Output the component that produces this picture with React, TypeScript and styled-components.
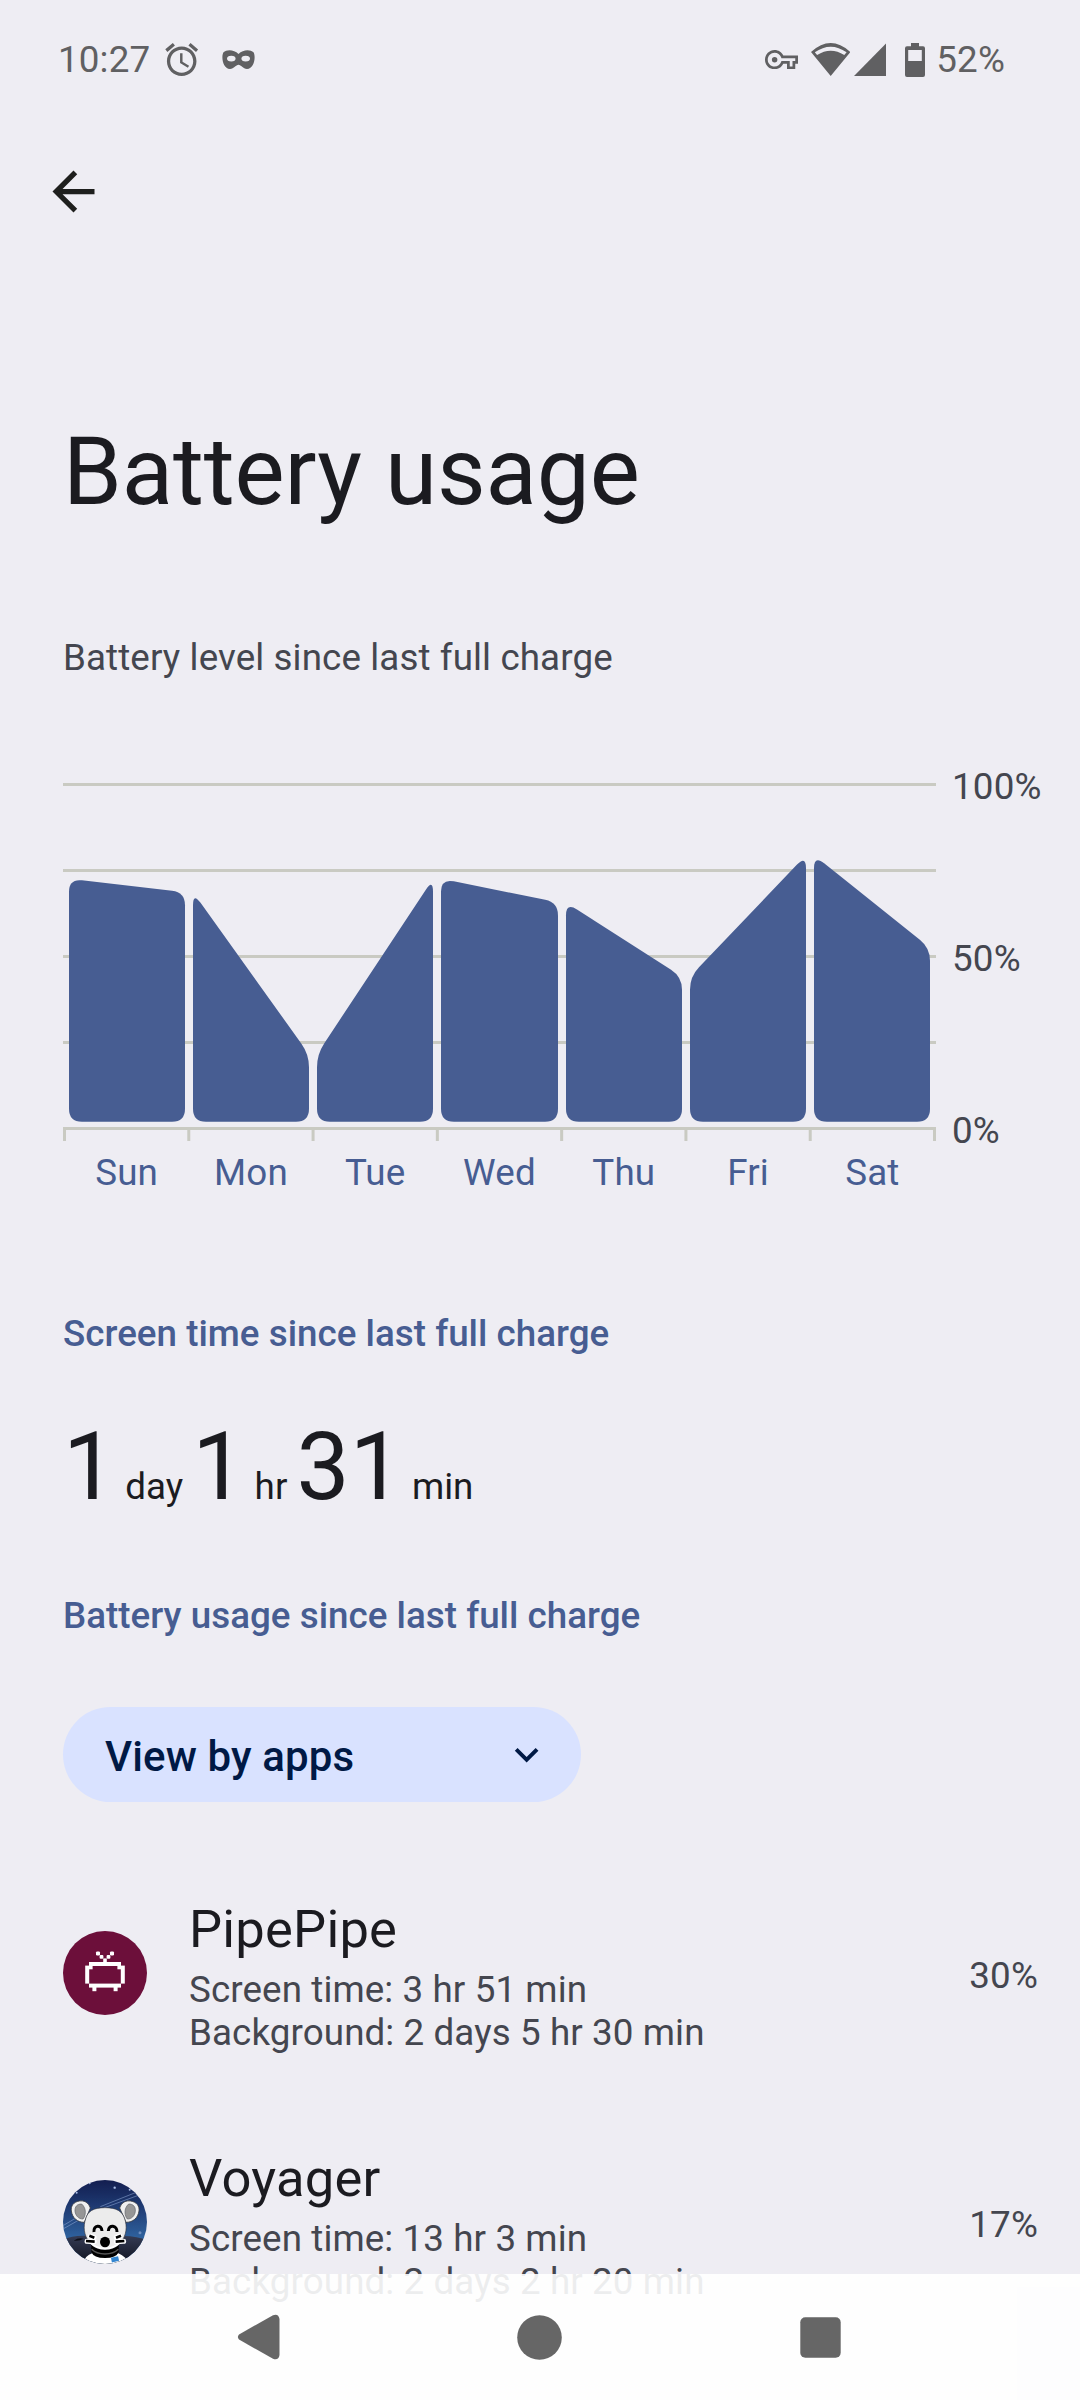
import React from "react";
import styled, { createGlobalStyle } from "styled-components";

const color = {
  page: "#eeedf3",
  ink: "#1b1b20",
  muted: "#44464f",
  accent: "#475d92",
  status: "#606062",
  grid: "#c9cac2",
  pill: "#d9e2ff",
  pillInk: "#001945",
  nav: "#666666",
};

const GlobalStyle = createGlobalStyle`
  body {
    margin: 0;
    background: ${color.page};
    font-family: Roboto, "Noto Sans", sans-serif;
  }
  svg { display: block; flex: none; }
`;

const Screen = styled.div`
  position: relative;
  width: 1080px;
  height: 2400px;
  overflow: hidden;
  background: ${color.page};
  color: ${color.ink};
`;

/* ---------- status bar ---------- */

const StatusBar = styled.header`
  display: flex;
  align-items: center;
  justify-content: space-between;
  height: 119px;
  padding: 0 75px 0 58px;
  color: ${color.status};
  font-size: 36.75px;
  font-weight: 450;
  letter-spacing: 0.15px;
  line-height: 44px;
`;

const StatusGroup = styled.div`
  display: flex;
  align-items: center;
`;

const StatusItem = styled.span<{ $gap: number }>`
  margin-left: ${(p) => p.$gap}px;
`;

const Clock = styled.span`
  width: 93px;
`;

const AlarmIcon = () => (
  <svg width="39.4" height="39.4" viewBox="0 0 24 24" fill="currentColor">
    <path d="M22 5.72l-4.6-3.86-1.29 1.53 4.6 3.86L22 5.72zM7.88 3.39L6.6 1.86 2 5.71l1.29 1.53 4.59-3.85zM12.5 8H11v6l4.75 2.85.75-1.23-4-2.37V8zM12 4c-4.97 0-9 4.03-9 9s4.02 9 9 9c4.97 0 9-4.03 9-9s-4.03-9-9-9zm0 16c-3.87 0-7-3.13-7-7s3.13-7 7-7 7 3.13 7 7-3.13 7-7 7z" />
  </svg>
);

const MaskIcon = () => (
  <svg width="33" height="19" viewBox="0 0 33 19" fill="currentColor">
    <path
      fillRule="evenodd"
      d="M1.5 2.200C4.500-.6 12-.8 16.500 4C21-.8 28.500-.6 31.500 2.200C34 6 32.500 19 25 19C21 19 19 14.800 16.500 14.800C14 14.800 12 19 8 19C.5 19-1 6 1.500 2.200ZM5 8.600a4.300 2.900 0 1 0 8.600 0a4.300 2.900 0 1 0-8.600 0ZM19.400 8.600a4.300 2.900 0 1 0 8.600 0a4.300 2.900 0 1 0-8.600 0Z"
    />
  </svg>
);

const KeyIcon = () => (
  <svg width="33" height="19.25" viewBox="0 5 24 14" fill="currentColor">
    <path d="M22 19h-6v-4h-2.680c-1.140 2.420-3.600 4-6.320 4-3.860 0-7-3.140-7-7s3.140-7 7-7c2.720 0 5.170 1.580 6.320 4H24v6h-2v4zm-4-2h2v-4h2v-2H11.940l-.23-.67C11.010 8.340 9.110 7 7 7c-2.760 0-5 2.240-5 5s2.240 5 5 5c2.110 0 4.010-1.340 4.710-3.330l.23-.67H18v4z" />
    <circle cx="7" cy="12" r="2" />
  </svg>
);

const WifiIcon = () => (
  <svg width="39.4" height="33" viewBox="0 0 39.4 33" fill="currentColor">
    <path
      fillRule="evenodd"
      d="M19.700 33L0 9Q19.700-9 39.400 9ZM3.800 9.300L6.100 12.100Q19.700 3.200 33.300 12.100L35.600 9.300Q19.700-2 3.800 9.300Z"
    />
  </svg>
);

const SignalIcon = () => (
  <svg width="32.5" height="33" viewBox="0 0 32.5 33" fill="currentColor">
    <path d="M0 33H32.500V0Z" />
  </svg>
);

const BatteryIcon = () => (
  <svg width="20" height="34" viewBox="0 0 20 34" fill="currentColor">
    <path
      fillRule="evenodd"
      d="M6 0h8v3.300h4a2 2 0 0 1 2 2V32a2 2 0 0 1-2 2H2a2 2 0 0 1-2-2V5.300a2 2 0 0 1 2-2h4ZM3.200 7v11h13.600V7Z"
    />
  </svg>
);

/* ---------- app bar and headings ---------- */

const AppBar = styled.nav`
  display: flex;
  align-items: center;
  height: 145px;
  padding-left: 42px;
`;

const IconButton = styled.button`
  display: flex;
  padding: 0;
  border: 0;
  background: none;
  color: #1e1f1d;
`;

const Content = styled.main`
  padding: 0 0 0 63px;
`;

const Title = styled.h1`
  margin: 152px 0 0;
  font-size: 94.5px;
  font-weight: 400;
  letter-spacing: -0.15px;
  line-height: 112px;
`;

const Caption = styled.p`
  margin: 107px 0 0;
  color: ${color.muted};
  font-size: 36.75px;
  letter-spacing: 0.11px;
  line-height: 45px;
`;

const SectionTitle = styled.h2<{ $top: number }>`
  margin: ${(p) => p.$top}px 0 0;
  color: ${color.accent};
  font-size: 36.75px;
  font-weight: 500;
  letter-spacing: 0.02px;
  line-height: 44px;
`;

/* ---------- chart ---------- */

const ChartRow = styled.section`
  display: flex;
  height: 431px;
  margin-top: 84px;
  font-size: 36.75px;
  letter-spacing: 0.2px;
  line-height: 44px;
`;

const PlotColumn = styled.div`
  width: 873px;
  padding-top: 19px;
`;

const DayLabels = styled.div`
  display: grid;
  grid-template-columns: repeat(7, 1fr);
  margin: 9.5px 1.5px 0;
  color: ${color.accent};
  text-align: center;
`;

const LevelLabels = styled.div`
  display: flex;
  flex-direction: column;
  justify-content: space-between;
  height: 388px;
  margin: 1px 0 0 16px;
  color: ${color.muted};
`;

const days = [
  { name: "Sun", from: 72, to: 68 },
  { name: "Mon", from: 68, to: 20 },
  { name: "Tue", from: 20, to: 72 },
  { name: "Wed", from: 72, to: 65 },
  { name: "Thu", from: 65, to: 43 },
  { name: "Fri", from: 43, to: 79 },
  { name: "Sat", from: 79, to: 51.5 },
];

const SLOT = 870 / 7;
const BASE = 338.8;
const UNIT = 3.375;
const RADIUS = 13;

type Point = [number, number];

/* Closed polygon whose corners are softened with quadratic curves. */
function roundedPolygon(points: Point[], radius: number): string {
  const toward = (a: Point, b: Point): Point => {
    const length = Math.hypot(b[0] - a[0], b[1] - a[1]);
    const k = radius / length;
    return [a[0] + (b[0] - a[0]) * k, a[1] + (b[1] - a[1]) * k];
  };
  const parts = points.map((p, i) => {
    const before = toward(p, points[(i + points.length - 1) % points.length]);
    const after = toward(p, points[(i + 1) % points.length]);
    return `${i ? "L" : "M"}${before.join(" ")}Q${p.join(" ")} ${after.join(" ")}`;
  });
  return parts.join("") + "Z";
}

const BatteryChart = () => (
  <svg width="873" height="358" viewBox="0 0 873 358">
    {[0, 86, 172, 258, 344].map((y) => (
      <rect key={y} x="0" y={y} width="873" height="3" fill={color.grid} />
    ))}
    {Array.from({ length: 8 }, (_, i) => (
      <rect key={i} x={i * SLOT} y="346" width="3" height="12" fill={color.grid} />
    ))}
    {days.map((d, i) => {
      const left = Math.floor(6 + i * SLOT);
      const right = Math.round((i + 1) * SLOT - 2.6);
      return (
        <path
          key={d.name}
          fill={color.accent}
          d={roundedPolygon(
            [
              [left, BASE],
              [left, BASE - d.from * UNIT],
              [right, BASE - d.to * UNIT],
              [right, BASE],
            ],
            RADIUS
          )}
        />
      );
    })}
  </svg>
);

/* ---------- screen time ---------- */

const Duration = styled.p`
  height: 112px;
  margin: 55px 0 0;
  font-size: 94.5px;
  line-height: 112px;
  white-space: pre;
`;

const Unit = styled.span`
  font-size: 36.75px;
  letter-spacing: 0.03px;
  line-height: 0;
`;

/* ---------- view selector ---------- */

const Selector = styled.button`
  display: flex;
  align-items: center;
  justify-content: space-between;
  width: 518px;
  height: 94.5px;
  margin-top: 69.5px;
  padding: 0 31px 0 42px;
  border: 0;
  border-radius: 48px;
  background: ${color.pill};
  color: ${color.pillInk};
  font-family: inherit;
  font-size: 42px;
  font-weight: 500;
  letter-spacing: 0.12px;
  line-height: 50px;
`;

const SelectorText = styled.span`
  padding-top: 5px;
`;

/* ---------- app list ---------- */

const AppList = styled.ul`
  margin: 50px 0 0;
  padding: 0;
  list-style: none;
`;

const AppRow = styled.li`
  display: flex;
  align-items: center;
  height: 249px;
  padding-right: 42px;
`;

const AppIcon = styled.div`
  width: 84px;
  height: 84px;
  margin: -6px 42px 0 0;
  border-radius: 50%;
  overflow: hidden;
`;

const AppText = styled.div`
  flex: 1;
  color: ${color.muted};
  font-size: 36.75px;
  letter-spacing: 0.1px;
  line-height: 43px;
`;

const AppName = styled.div`
  margin-bottom: 8px;
  color: ${color.ink};
  font-size: 52.5px;
  letter-spacing: 0.22px;
  line-height: 62px;
`;

const Percent = styled.div`
  color: ${color.muted};
  font-size: 36.75px;
  letter-spacing: 0.2px;
  line-height: 44px;
`;

const PipePipeIcon = () => (
  <svg width="84" height="84" viewBox="0 0 84 84">
    <rect width="84" height="84" fill="#6c0f3a" />
    <g fill="#fff">
      <rect x="26" y="31" width="32" height="4" />
      <rect x="22.2" y="34.6" width="4" height="18" />
      <rect x="57.8" y="34.6" width="4" height="18" />
      <rect x="26" y="34.5" width="3.6" height="3.8" />
      <rect x="54.4" y="34.5" width="3.6" height="3.8" />
      <rect x="26" y="52.6" width="32" height="4" />
      <rect x="29.4" y="56" width="4" height="4.2" />
      <rect x="50.6" y="56" width="4" height="4.2" />
      <rect x="33" y="20.4" width="4" height="4" rx="1.2" />
      <rect x="47" y="20.4" width="4" height="4" rx="1.2" />
      <rect x="36.6" y="24" width="3.8" height="3.8" rx="1" />
      <rect x="43.6" y="24" width="3.8" height="3.8" rx="1" />
      <rect x="40.2" y="27.4" width="3.6" height="4" />
    </g>
  </svg>
);

const VoyagerIcon = () => (
  <svg width="84" height="84" viewBox="0 0 252 252">
    <defs>
      <linearGradient id="sky" x1="0" y1="0" x2="0" y2="1">
        <stop offset="0" stopColor="#131e50" />
        <stop offset="0.4" stopColor="#23437c" />
        <stop offset="0.7" stopColor="#2f639f" />
      </linearGradient>
      <linearGradient id="hill" x1="0" y1="0" x2="0" y2="1">
        <stop offset="0" stopColor="#343b54" />
        <stop offset="1" stopColor="#10131f" />
      </linearGradient>
    </defs>
    <rect width="252" height="252" fill="url(#sky)" />
    <g stroke="#8fa9d6" strokeWidth="3" opacity="0.55">
      <path d="M0 137L42 112M0 147L46 121M112 80L222 36M122 84L226 46" />
    </g>
    <g fill="#a9bde6">
      <circle cx="155" cy="23" r="3.5" />
      <circle cx="80" cy="10" r="3" />
      <circle cx="200" cy="29" r="3" />
      <circle cx="41" cy="38" r="3" />
      <circle cx="231" cy="158" r="4.5" opacity="0.5" />
    </g>
    <path d="M0 180Q30 165 75 168H180Q225 168 252 182V252H0Z" fill="url(#hill)" />
    <path d="M32 182Q46 172 62 176Q50 184 32 182Z" fill="#0d0f18" />
    <path d="M60 252Q66 226 88 220L126 232L166 220Q190 230 198 252Z" fill="#fff" />
    <path d="M85 190H167V216Q160 234 126 234Q92 234 85 216Z" fill="#000" />
    <path d="M86 208Q100 222 126 222Q152 222 166 208" fill="none" stroke="#555" strokeWidth="4" />
    <rect x="145" y="231" width="22" height="14" fill="#3385d0" transform="rotate(-12 156 238)" />
    <g stroke="#34373f" strokeWidth="2.5">
      <path d="M82 84C76 66 62 61 49 63C31 66 23 78 25 93C28 114 43 127 64 127Z" fill="#f1f1f1" />
      <path d="M170 84C176 66 190 61 203 63C221 66 230 78 228 93C225 114 210 127 189 127Z" fill="#f1f1f1" />
    </g>
    <path d="M56 72C42 72 35 80 36 94C38 108 47 117 60 117C68 108 72 86 56 72Z" fill="#969696" stroke="#60646a" strokeWidth="2" />
    <path d="M197 72C211 72 218 80 217 94C215 108 206 117 193 117C185 108 181 86 197 72Z" fill="#969696" stroke="#60646a" strokeWidth="2" />
    <path d="M126 83C91 83 74 94 68 116C60 140 62 165 80 188C94 206 111 208 126 208C141 208 158 206 173 188C191 165 193 140 185 116C178 94 161 83 126 83Z" fill="#ececec" stroke="#333640" strokeWidth="2" />
    <g fill="none" stroke="#fff" strokeWidth="15" strokeLinecap="round">
      <path d="M72 184L94 185M82 168L93 172M182 184L160 185M171 168L160 172" />
    </g>
    <path d="M82 188Q100 206 126 206Q152 206 170 188" fill="none" stroke="#fff" strokeWidth="6" />
    <g fill="none" stroke="#000" strokeWidth="8">
      <path d="M69 183L95 185M79 167L94 173M184 183L158 185M174 167L159 173" />
      <path d="M93 156C90 135 116 132 117 153M136 153C137 132 163 135 162 156" strokeWidth="9" />
    </g>
    <ellipse cx="126" cy="186" rx="15" ry="16" fill="#000" />
  </svg>
);

const apps = [
  {
    name: "PipePipe",
    icon: <PipePipeIcon />,
    screen: "3 hr 51 min",
    background: "2 days 5 hr 30 min",
    percent: "30%",
  },
  {
    name: "Voyager",
    icon: <VoyagerIcon />,
    screen: "13 hr 3 min",
    background: "2 days 2 hr 20 min",
    percent: "17%",
  },
];

/* ---------- system navigation ---------- */

const SystemNav = styled.footer`
  position: absolute;
  left: 0;
  right: 0;
  bottom: 0;
  display: flex;
  align-items: center;
  justify-content: center;
  gap: 236px;
  height: 126px;
  padding-right: 1px;
  background: rgba(255, 255, 255, 0.9);
`;

const NavIcon = ({ children }: { children: React.ReactNode }) => (
  <svg width="45" height="46" viewBox="0 0 45 46" fill={color.nav}>
    {children}
  </svg>
);

export default function App() {
  return (
    <Screen>
      <GlobalStyle />
      <StatusBar>
        <StatusGroup>
          <Clock>10:27</Clock>
          <StatusItem $gap={10.5}><AlarmIcon /></StatusItem>
          <StatusItem $gap={21.5}><MaskIcon /></StatusItem>
        </StatusGroup>
        <StatusGroup>
          <KeyIcon />
          <StatusItem $gap={13}><WifiIcon /></StatusItem>
          <StatusItem $gap={3.5}><SignalIcon /></StatusItem>
          <StatusItem $gap={19}><BatteryIcon /></StatusItem>
          <StatusItem $gap={11}>52%</StatusItem>
        </StatusGroup>
      </StatusBar>

      <AppBar>
        <IconButton aria-label="Back">
          <svg width="63" height="63" viewBox="0 0 24 24" fill="currentColor">
            <path d="M20 11H7.830l5.590-5.590L12 4l-8 8 8 8 1.410-1.410L7.830 13H20v-2z" />
          </svg>
        </IconButton>
      </AppBar>

      <Content>
        <Title>Battery usage</Title>
        <Caption>Battery level since last full charge</Caption>

        <ChartRow>
          <PlotColumn>
            <BatteryChart />
            <DayLabels>
              {days.map((d) => (
                <span key={d.name}>{d.name}</span>
              ))}
            </DayLabels>
          </PlotColumn>
          <LevelLabels>
            <span>100%</span>
            <span>50%</span>
            <span>0%</span>
          </LevelLabels>
        </ChartRow>

        <SectionTitle $top={116.5}>Screen time since last full charge</SectionTitle>
        <Duration>
          1<Unit> day </Unit>1<Unit> hr </Unit>31<Unit> min</Unit>
        </Duration>

        <SectionTitle $top={71}>Battery usage since last full charge</SectionTitle>
        <Selector>
          <SelectorText>View by apps</SelectorText>
          <svg width="47.25" height="47.25" viewBox="0 0 24 24" fill="currentColor">
            <path d="M16.590 8.590L12 13.170 7.410 8.590 6 10l6 6 6-6z" />
          </svg>
        </Selector>

        <AppList>
          {apps.map((app) => (
            <AppRow key={app.name}>
              <AppIcon>{app.icon}</AppIcon>
              <AppText>
                <AppName>{app.name}</AppName>
                <div>Screen time: {app.screen}</div>
                <div>Background: {app.background}</div>
              </AppText>
              <Percent>{app.percent}</Percent>
            </AppRow>
          ))}
        </AppList>
      </Content>

      <SystemNav>
        <NavIcon>
          <path d="M3 20.500L37 1.200Q42.500-.8 43.500 5V41Q42.500 46.800 37 44.800L3 25.500Q.8 23 3 20.500Z" />
        </NavIcon>
        <NavIcon>
          <circle cx="22.5" cy="23.5" r="22.3" />
        </NavIcon>
        <NavIcon>
          <rect x="2.3" y="3.3" width="40.4" height="40.4" rx="5" />
        </NavIcon>
      </SystemNav>
    </Screen>
  );
}
